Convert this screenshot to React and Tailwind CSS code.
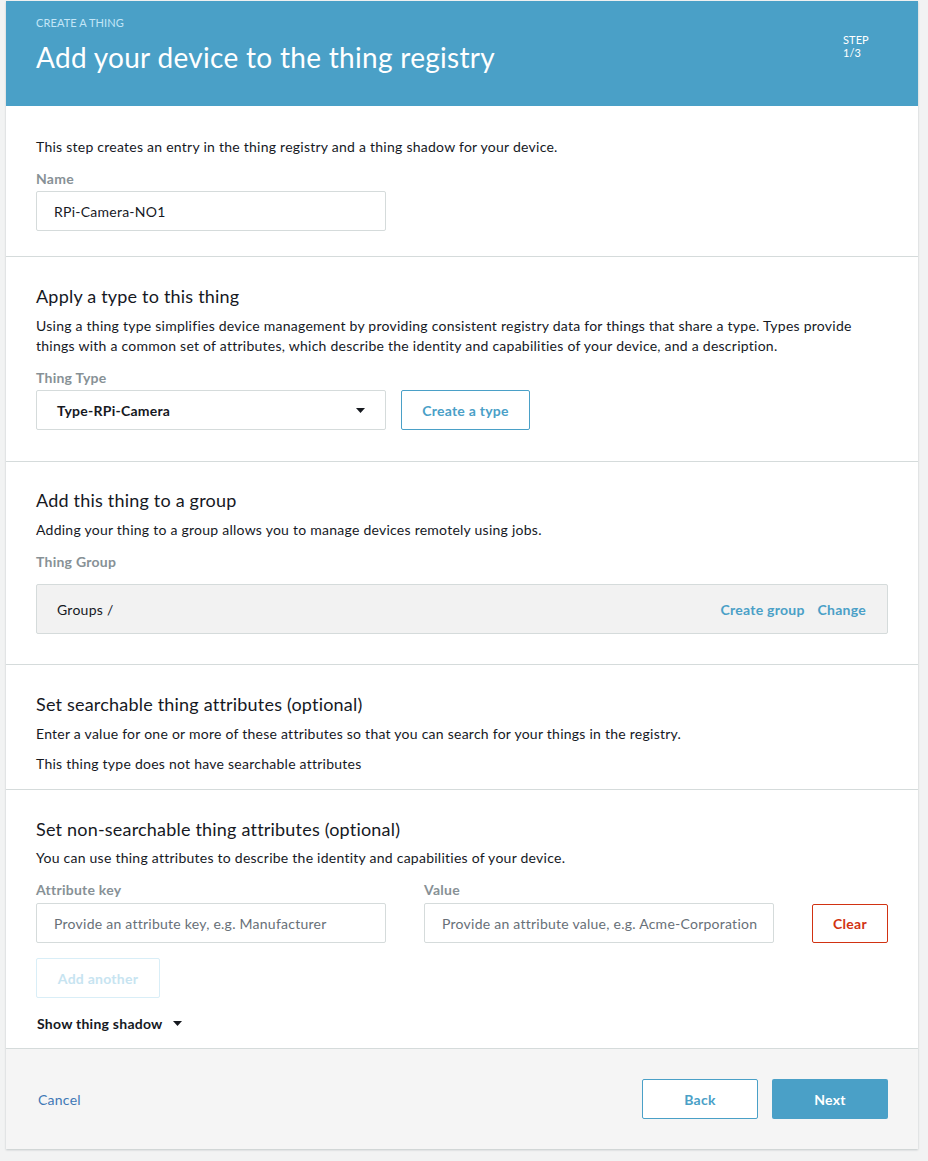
import React from "react";

const font = { fontFamily: "Lato, 'Open Sans', sans-serif" };

function Label({ children, mb = "mb-[2px]" }) {
  return <div className={`text-[14px] font-bold text-[#879196] leading-[20px] ${mb}`}>{children}</div>;
}

export default function App() {
  return (
    <div className="min-h-[1161px] bg-[#f2f3f3] pl-[6px] pr-[10px] pt-[1px] pb-[12px] text-[#16191f] tracking-[0.25px]" style={font}>
      <div className="bg-white shadow-[0_1px_2px_rgba(0,28,36,0.2)]">
        <div className="bg-[#4aa0c7] h-[105px] px-[30px] pt-[15px] flex justify-between">
          <div>
            <div className="text-[11px] leading-[14px] text-[#c3e6f7] uppercase tracking-[0.1px]">Create a thing</div>
            <div className="text-[28px] leading-[36px] text-white mt-[9px] tracking-[0.3px]">Add your device to the thing registry</div>
          </div>
          <div className="text-[11px] leading-[13px] text-white pt-[17px] w-[45px] tracking-[0.1px]">
            STEP<br />1/3
          </div>
        </div>

        <div className="px-[30px] pt-[31px] pb-[25px] border-b border-[#d5dbdb]">
          <p className="text-[14px] leading-[20px]">This step creates an entry in the thing registry and a thing shadow for your device.</p>
          <div className="mt-[12px]">
            <Label>Name</Label>
            <div className="w-[350px] h-[40px] border border-[#d5dbdb] rounded-[2px] flex items-center px-[17px] text-[14px]">RPi-Camera-NO1</div>
          </div>
        </div>

        <div className="px-[30px] pt-[27px] pb-[31px] border-b border-[#d5dbdb]">
          <h2 className="text-[18px] leading-[24px] tracking-[0.2px]">Apply a type to this thing</h2>
          <p className="text-[14px] leading-[20px] mt-[8px]">
            Using a thing type simplifies device management by providing consistent registry data for things that share a type. Types provide things with a common set of attributes, which describe the identity and capabilities of your device, and a description.
          </p>
          <div className="mt-[12px]">
            <Label>Thing Type</Label>
            <div className="flex gap-[15px]">
              <div className="w-[350px] h-[40px] border border-[#d5dbdb] rounded-[2px] flex items-center justify-between pl-[20px] pr-[20px] text-[14px] font-bold">
                <span>Type-RPi-Camera</span>
                <svg width="9" height="5" viewBox="0 0 9 5"><path d="M0 0h9L4.5 5z" fill="#16191f" /></svg>
              </div>
              <div className="w-[129px] h-[40px] border border-[#4aa0c7] rounded-[2px] flex items-center justify-center text-[14px] font-bold text-[#4aa0c7]">Create a type</div>
            </div>
          </div>
        </div>

        <div className="px-[30px] pt-[26px] pb-[30px] border-b border-[#d5dbdb]">
          <h2 className="text-[18px] leading-[24px] tracking-[0.2px]">Add this thing to a group</h2>
          <p className="text-[14px] leading-[20px] mt-[8px]">Adding your thing to a group allows you to manage devices remotely using jobs.</p>
          <div className="mt-[12px]">
            <Label mb="mb-[12px]">Thing Group</Label>
            <div className="h-[50px] bg-[#f2f2f2] border border-[#d5dbdb] rounded-[2px] flex items-center justify-between pl-[20px] pr-[21px] text-[14px]">
              <span>Groups /</span>
              <div className="flex gap-[13px] font-bold text-[#4aa0c7]">
                <span>Create group</span>
                <span>Change</span>
              </div>
            </div>
          </div>
        </div>

        <div className="px-[30px] pt-[27px] pb-[15px] border-b border-[#d5dbdb]">
          <h2 className="text-[18px] leading-[24px] tracking-[0.2px]">Set searchable thing attributes (optional)</h2>
          <p className="text-[14px] leading-[20px] mt-[8px]">Enter a value for one or more of these attributes so that you can search for your things in the registry.</p>
          <p className="text-[14px] leading-[20px] mt-[10px]">This thing type does not have searchable attributes</p>
        </div>

        <div className="px-[30px] pt-[27px] pb-[14px] border-b border-[#d5dbdb]">
          <h2 className="text-[18px] leading-[24px] tracking-[0.2px]">Set non-searchable thing attributes (optional)</h2>
          <p className="text-[14px] leading-[20px] mt-[7px]">You can use thing attributes to describe the identity and capabilities of your device.</p>
          <div className="flex items-end gap-[38px] mt-[12px]">
            <div>
              <Label mb="mb-[3px]">Attribute key</Label>
              <div className="w-[350px] h-[40px] border border-[#d5dbdb] rounded-[2px] flex items-center px-[17px] text-[14px] text-[#687078]">Provide an attribute key, e.g. Manufacturer</div>
            </div>
            <div>
              <Label mb="mb-[3px]">Value</Label>
              <div className="w-[350px] h-[40px] border border-[#d5dbdb] rounded-[2px] flex items-center px-[17px] text-[14px] text-[#687078] whitespace-nowrap overflow-hidden">Provide an attribute value, e.g. Acme-Corporation</div>
            </div>
            <div className="ml-auto w-[76px] h-[39px] border border-[#d13212] rounded-[2px] flex items-center justify-center text-[14px] font-bold text-[#d13212]">Clear</div>
          </div>
          <div className="mt-[15px] w-[124px] h-[40px] border border-[#d9eef7] rounded-[2px] flex items-center justify-center text-[14px] font-bold text-[#c7e4f1]">Add another</div>
          <div className="mt-[14px] flex items-center gap-[10px] text-[14px] font-bold h-[22px]">
            <span className="pl-[1px]">Show thing shadow</span>
            <svg width="9" height="5" viewBox="0 0 9 5"><path d="M0 0h9L4.5 5z" fill="#16191f" /></svg>
          </div>
        </div>

        <div className="bg-[#f5f5f5] h-[100px] px-[30px] flex items-center justify-between">
          <span className="text-[14px] text-[#3f78b6] pl-[2px]">Cancel</span>
          <div className="flex gap-[14px]">
            <div className="w-[116px] h-[40px] border border-[#4aa0c7] rounded-[2px] bg-white flex items-center justify-center text-[14px] font-bold text-[#4aa0c7]">Back</div>
            <div className="w-[116px] h-[40px] rounded-[2px] bg-[#4aa0c7] flex items-center justify-center text-[14px] font-bold text-white">Next</div>
          </div>
        </div>
      </div>
    </div>
  );
}
